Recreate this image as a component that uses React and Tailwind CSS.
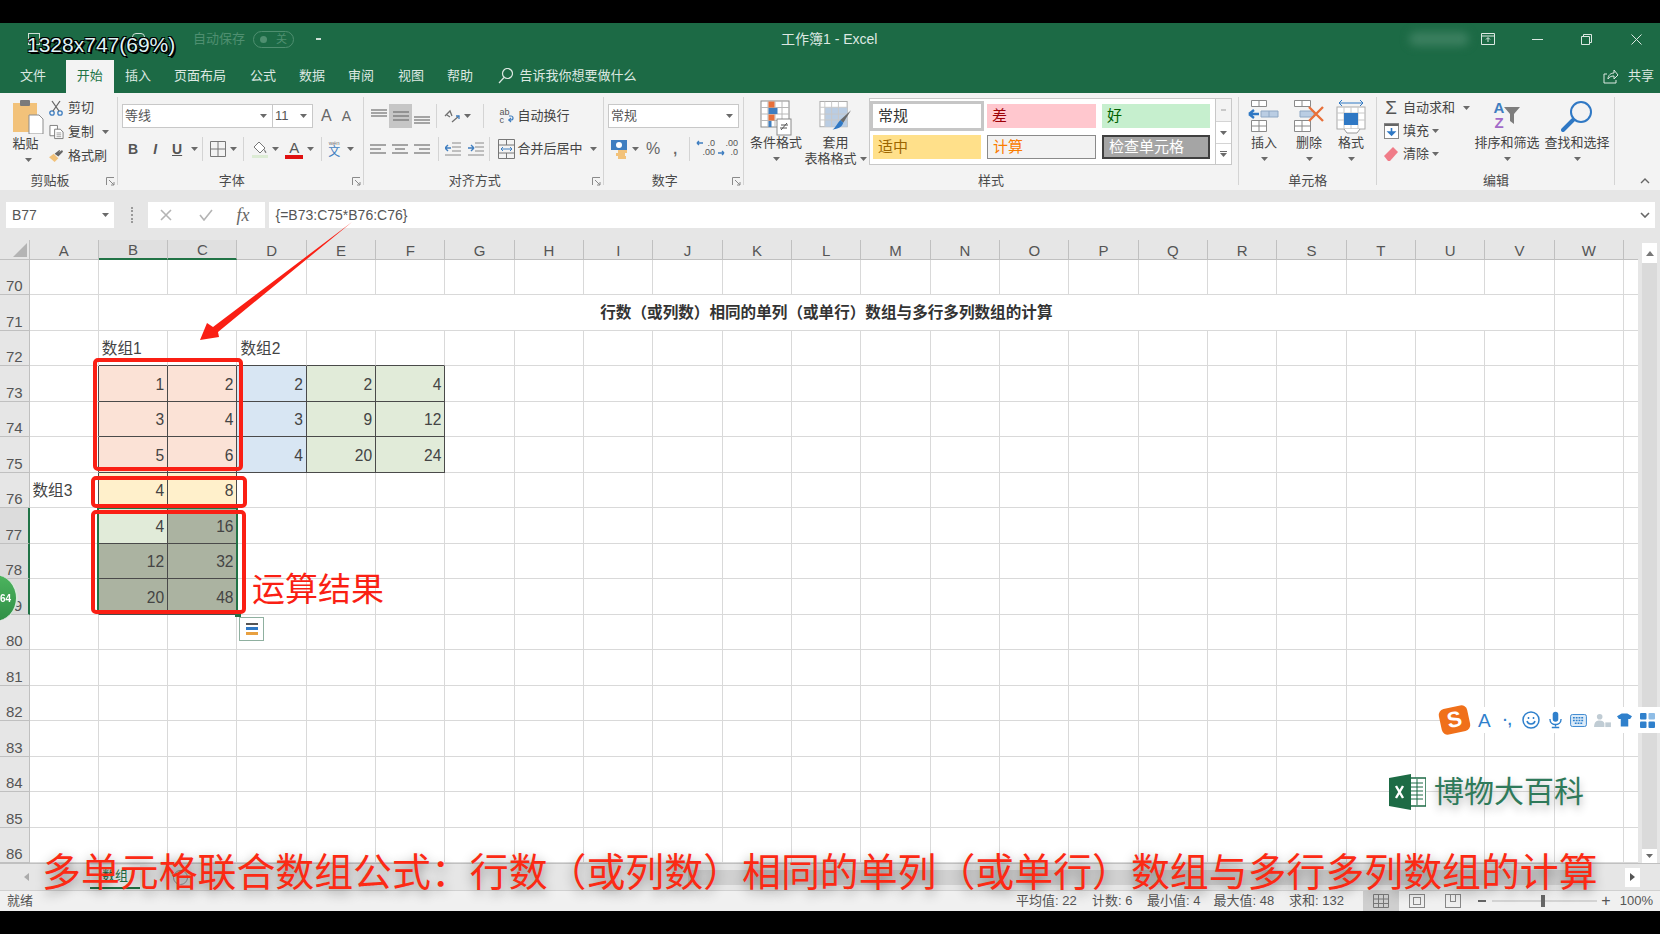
// App.jsx - Excel window video frame

const COLS = 'ABCDEFGHIJKLMNOPQRSTUVW'.split('');
const ROWS = Array.from({ length: 17 }, (_, i) => 70 + i);

const VALUES = {
  B72: '数组1', D72: '数组2',
  B73: 1, C73: 2, D73: 2, E73: 2, F73: 4,
  B74: 3, C74: 4, D74: 3, E74: 9, F74: 12,
  B75: 5, C75: 6, D75: 4, E75: 20, F75: 24,
  A76: '数组3', B76: 4, C76: 8,
  B77: 4, C77: 16, B78: 12, C78: 32, B79: 20, C79: 48,
};

const fillFor = (id) => {
  const c = id[0];
  const r = Number(id.slice(1));
  if ((c === 'B' || c === 'C') && r >= 73 && r <= 75) return 'bg-[#fbe2d6]';
  if (c === 'D' && r >= 73 && r <= 75) return 'bg-[#d8e6f3]';
  if ((c === 'E' || c === 'F') && r >= 73 && r <= 75) return 'bg-[#e1ebd9]';
  if ((c === 'B' || c === 'C') && r === 76) return 'bg-[#fff0cb]';
  if (id === 'B77') return 'bg-[#e1ebd9]';
  if ((c === 'B' || c === 'C') && r >= 77 && r <= 79) return 'bg-[#abb3a1]';
  return 'bg-white';
};

const inTable = (c, r) =>
  (r >= 73 && r <= 75 && 'BCDEF'.includes(c)) || (r >= 76 && r <= 79 && 'BC'.includes(c));

const Caret = ({ className = '' }) => (
  <svg viewBox="0 0 7 4" className={'w-[7px] h-[4px] shrink-0 ' + className}>
    <path d="M0 0h7L3.5 4z" fill="#6a6a6a" />
  </svg>
);

const Lines = ({ rows, className = 'w-[16px] h-[14px]' }) => (
  <svg viewBox="0 0 16 14" className={className}>
    {rows.map(([a, b, y], i) => (
      <path key={i} d={`M${a} ${y}H${b}`} stroke="#707070" strokeWidth="1.2" />
    ))}
  </svg>
);

const Sep = ({ className = '' }) => <div className={'w-px h-[24px] bg-[#d4d4d4] shrink-0 ' + className} />;

const Launcher = () => (
  <svg viewBox="0 0 9 9" className="w-[9px] h-[9px] absolute right-[3px] bottom-[4px]">
    <path d="M.5 8V.5H8M3 3l5 5M8 5v3H5" fill="none" stroke="#8a8a8a" />
  </svg>
);

const Group = ({ label, width, children, launcher }) => (
  <div className={'relative flex flex-col h-full shrink-0 ' + width}>
    <div className="flex-1 min-h-0">{children}</div>
    <div className={'h-[19px] text-center text-[13px] leading-[19px] text-[#4a4a4a] ' + (launcher ? 'pr-[18px]' : '')}>{label}</div>
    {launcher && <Launcher />}
    <div className="absolute right-0 top-[4px] w-px h-[88px] bg-[#d4d4d4]" />
  </div>
);

const LargeBtn = ({ icon, top, bottom, caretInline, width }) => (
  <div className={'flex flex-col items-center shrink-0 ' + width}>
    <div className="h-[35px] flex items-start justify-center">{icon}</div>
    <div className="h-[16px] text-[13px] leading-[16px] whitespace-nowrap text-[#444]">{top}</div>
    <div className="h-[16px] flex items-center gap-[3px] text-[13px] leading-[16px] whitespace-nowrap text-[#444]">
      {bottom}
      {(!bottom || caretInline) && <Caret />}
    </div>
  </div>
);

const SmallRow = ({ icon, text, caret, iconBox = 'w-[20px]' }) => (
  <div className="h-[23px] flex items-center text-[13px] text-[#444] whitespace-nowrap">
    <div className={'flex justify-center shrink-0 ' + iconBox}>{icon}</div>
    <span className="ml-[2px]">{text}</span>
    {caret}
  </div>
);

const SelectBox = ({ text, className }) => (
  <div className={'h-[24px] bg-white border border-[#c8c8c8] flex items-center justify-between pl-[2px] pr-[5px] text-[13px] text-[#555] ' + className}>
    <span>{text}</span>
    <Caret />
  </div>
);

const StyleCell = ({ text, className }) => (
  <div className={'h-[24px] flex items-center pl-[5px] text-[15px] ' + className}>{text}</div>
);

const PasteIcon = () => (
  <svg viewBox="0 0 32 34" className="w-[32px] h-[34px]">
    <rect x="1" y="3" width="24" height="29" fill="#f2c27a" />
    <rect x="8" y="0" width="10" height="6" rx="1" fill="#7b7b7b" />
    <path d="M17 15h10l4 4v15H17z" fill="#fff" stroke="#8d8d8d" />
  </svg>
);
const ScissorsIcon = () => (
  <svg viewBox="0 0 14 16" className="w-[14px] h-[16px]" fill="none" stroke="#3f7ec0" strokeWidth="1.3">
    <circle cx="3" cy="13" r="2.2" />
    <circle cx="11" cy="13" r="2.2" />
    <path d="M4 11L11 1M10 11L3 1" stroke="#666" />
  </svg>
);
const CopyIcon = () => (
  <svg viewBox="0 0 16 16" className="w-[15px] h-[16px]" fill="#fff" stroke="#7a7a7a">
    <path d="M1 1h8v11H1z" />
    <path d="M6 5h6l3 3v7H6z" />
    <path d="M8 9h5M8 11h5M8 13h5" stroke="#9a9a9a" />
  </svg>
);
const BrushIcon = () => (
  <svg viewBox="0 0 16 14" className="w-[15px] h-[13px]">
    <path d="M0 9l5-4 5 5-4 4z" fill="#f2c27a" />
    <path d="M6 5l5-4 1 1-2 2 4-3 1 2-5 5z" fill="#666" />
  </svg>
);
const BorderIcon = () => (
  <svg viewBox="0 0 16 16" className="w-[16px] h-[16px]" fill="none" stroke="#777">
    <path d="M.5.5h15v15H.5zM8 .5v15M.5 8h15" />
  </svg>
);
const FillIcon = () => (
  <svg viewBox="0 0 16 18" className="w-[16px] h-[18px]">
    <path d="M7 2l6 6-5 5-6-6z" fill="#fff" stroke="#777" />
    <path d="M12 9c2 2 3 4 2 4s-2-2-2-4z" fill="#777" />
    <rect x="0" y="15" width="16" height="3" fill="#dcebd4" />
  </svg>
);
const WrapIcon = () => (
  <svg viewBox="0 0 14 16" className="w-[14px] h-[16px]" fill="none" stroke="#3f7ec0" strokeWidth="1.2">
    <path d="M8 12h3a2 2 0 0 0 0-4H9M9 12l2-2M9 12l2 2" />
  </svg>
);
const MergeIcon = () => (
  <svg viewBox="0 0 17 20" className="w-[17px] h-[20px]" fill="none" stroke="#777">
    <path d="M.5.5h16v19H.5zM.5 6h16M.5 14h16M8.5.5V6M8.5 14v5.5" />
    <path d="M3 10h11M3 10l2-2M3 10l2 2M14 10l-2-2M14 10l-2 2" stroke="#3f7ec0" />
  </svg>
);
const OrientIcon = () => (
  <svg viewBox="0 0 18 16" className="w-[18px] h-[16px]" fill="none" stroke="#707070" strokeWidth="1.3">
    <path d="M2 8l5-5 2 5M4 7l3 2M9 14l7-6" />
    <path d="M13 8h3v3" stroke="#3f7ec0" />
  </svg>
);
const IndentIcon = ({ flip }) => (
  <svg viewBox="0 0 16 16" className="w-[16px] h-[16px]" fill="none">
    <path d="M7 2h9M7 6h9M7 10h9M0 14h16" stroke="#8a8a8a" />
    <path d={flip ? 'M0 7h6M6 7L3 4M6 7l-3 3' : 'M0 7h6M0 7l3-3M0 7l3 3'} stroke="#3f7ec0" strokeWidth="1.4" />
  </svg>
);
const CurrencyIcon = () => (
  <svg viewBox="0 0 17 19" className="w-[17px] h-[19px]">
    <rect x="0" y="0" width="16" height="10" fill="#3f7ec0" />
    <circle cx="8" cy="5" r="3" fill="#fff" />
    <rect x="7" y="10" width="9" height="3" fill="#f2c27a" />
    <rect x="5" y="13" width="9" height="3" fill="#f2c27a" />
    <rect x="7" y="16" width="8" height="3" fill="#f2c27a" />
  </svg>
);
const DecimalIcon = ({ more }) => (
  <div className="relative w-[20px] h-[20px] text-[9px] leading-[9px] text-[#555] text-right">
    <div>{more ? '.0' : '.00'}</div>
    <div>{more ? '.00' : '.0'}</div>
    <svg viewBox="0 0 8 6" className={'w-[8px] h-[6px] absolute left-0 ' + (more ? 'top-[1px]' : 'top-[11px]')}>
      <path d={more ? 'M8 3H2M2 3l2-2M2 3l2 2' : 'M0 3h6M6 3L4 1M6 3L4 5'} stroke="#3f7ec0" strokeWidth="1.4" fill="none" />
    </svg>
  </div>
);
const CondIcon = () => (
  <svg viewBox="0 0 32 37" className="w-[32px] h-[37px]">
    <rect x="1" y="1" width="28" height="26" fill="#fff" stroke="#8a8a8a" />
    <path d="M8 1v26M15 1v26M22 1v26M1 7.5h28M1 14h28M1 20.5h28" stroke="#b8b8b8" />
    <rect x="8.5" y="1.5" width="6" height="6" fill="#e8703a" />
    <rect x="8.5" y="8" width="9" height="6" fill="#3f7ec0" />
    <rect x="8.5" y="14.5" width="6" height="6" fill="#e8703a" />
    <rect x="8.5" y="21" width="3" height="6" fill="#3f7ec0" />
    <rect x="17" y="19" width="14" height="16" fill="#fff" stroke="#8a8a8a" />
    <path d="M21 30l6-7M21 25h7M20 28h7" stroke="#555" />
  </svg>
);
const TableIcon = () => (
  <svg viewBox="0 0 34 35" className="w-[33px] h-[35px]">
    <rect x="1" y="1" width="28" height="26" fill="#fff" stroke="#aaa" />
    <rect x="6" y="7" width="23" height="20" fill="#bacde3" />
    <path d="M6 1v26M13 1v26M20 1v26M1 7h28M1 14h28M1 20h28" stroke="#c8c8c8" />
    <path d="M33 10l-8 13-3-3z" fill="#6a6a6a" />
    <path d="M22 20l3 3c-2 6-7 6-11 7 3-2 5-7 8-10z" fill="#2f78c4" />
  </svg>
);
const InsertIcon = () => (
  <svg viewBox="0 0 32 32" className="w-[32px] h-[32px]">
    <g fill="#fff" stroke="#8a8a8a">
      <path d="M3.5.5h15v6h-15zM11 .5v6M3.5 20.5h15v11h-15zM3.5 26h15M11 20.5v11" />
    </g>
    <path d="M13 11h17v6H13zM21 11v6" fill="#bacde3" stroke="#8fa8c4" />
    <path d="M11 14H1M1 14l5-4M1 14l5 4" stroke="#2f78c4" strokeWidth="2.4" fill="none" />
  </svg>
);
const DeleteIcon = () => (
  <svg viewBox="0 0 32 32" className="w-[32px] h-[32px]">
    <g fill="#fff" stroke="#8a8a8a">
      <path d="M1.5.5h16v6h-16zM9 .5v6M1.5 20.5h16v11h-16zM1.5 26h16M9 20.5v11" />
    </g>
    <path d="M7 11h14v6H7z" fill="#bacde3" stroke="#8fa8c4" />
    <path d="M16 7l14 14M30 7L16 21" stroke="#e8703a" strokeWidth="2.4" />
  </svg>
);
const FormatIcon = () => (
  <svg viewBox="0 0 30 34" className="w-[30px] h-[34px]">
    <path d="M3 3h24M3 3l3-3M3 3l3 3M27 3l-3-3M27 3l-3 3" stroke="#2f78c4" fill="none" />
    <rect x="1" y="7" width="28" height="22" fill="#fff" stroke="#aaa" />
    <path d="M8 7v22M15 7v22M22 7v22M1 13h28M1 20h28" stroke="#c8c8c8" />
    <rect x="8" y="13" width="14" height="12" fill="#2f78c4" />
    <path d="M8 29l3 4h10l3-4" fill="#fff" stroke="#999" />
  </svg>
);
const FillDownIcon = () => (
  <svg viewBox="0 0 15 16" className="w-[15px] h-[16px]">
    <rect x=".5" y=".5" width="14" height="15" fill="#fff" stroke="#888" />
    <path d="M.5 2h14" stroke="#666" strokeWidth="2" />
    <path d="M7.5 5v7M7.5 12l-3-3h6z" stroke="#2f78c4" strokeWidth="1.6" fill="#2f78c4" />
  </svg>
);
const EraserIcon = () => (
  <svg viewBox="0 0 14 14" className="w-[14px] h-[14px]">
    <path d="M9 0l5 5-8 9H4L0 9z" fill="#f07c88" />
  </svg>
);
const FunnelIcon = () => (
  <svg viewBox="0 0 16 17" className="w-[16px] h-[17px]">
    <path d="M0 0h16l-6 7v10l-4-3V7z" fill="#7d7d7d" />
  </svg>
);
const SearchBig = () => (
  <svg viewBox="0 0 32 32" className="w-[32px] h-[32px]" fill="none">
    <circle cx="20" cy="12" r="10" stroke="#2f78c4" strokeWidth="2" />
    <path d="M12 20L2 30" stroke="#2f78c4" strokeWidth="4" strokeLinecap="round" />
  </svg>
);

const TitleBar = () => (
  <div className="h-[37px] bg-[#1c6a45] flex items-center text-[#dce8e2] pb-[5px]">
    <div className="w-[330px] shrink-0 flex items-center">
      <div className="ml-[28px] w-[12px] h-[12px] border border-[#cfe0d7]" />
      <div className="ml-[92px] w-[13px] h-[12px] border border-[#cfe0d7] rounded-[4px]" />
      <span className="ml-[48px] text-[13px] text-[#4f8f70] whitespace-nowrap">自动保存</span>
      <div className="ml-[8px] w-[41px] h-[17px] rounded-full border border-[#4f8f70] flex items-center justify-between px-[6px] text-[11px] text-[#4f8f70]">
        <div className="w-[7px] h-[7px] rounded-full bg-[#4f8f70]" />
        <span>关</span>
      </div>
      <div className="ml-[22px] w-[5px] h-[2px] bg-[#cfe0d7]" />
    </div>
    <div className="ml-[451px] text-[14px] whitespace-nowrap">工作簿1 - Excel</div>
    <div className="ml-[532px] w-[60px] h-[14px] rounded-full bg-[#3b7f5f] blur-[4px]" />
    <svg viewBox="0 0 14 12" className="ml-[12px] w-[14px] h-[12px]" fill="none" stroke="#dce8e2">
      <path d="M.5.5h13v11H.5zM.5 3h13M7 9V5M5 6.5L7 4.5l2 2" />
    </svg>
    <div className="ml-[37px] w-[11px] h-px bg-[#dce8e2]" />
    <svg viewBox="0 0 11 11" className="ml-[38px] w-[11px] h-[11px]" fill="none" stroke="#dce8e2">
      <path d="M.5 2.5h8v8h-8zM2.5 2.5v-2h8v8h-2" />
    </svg>
    <svg viewBox="0 0 11 11" className="ml-[39px] w-[11px] h-[11px]" fill="none" stroke="#dce8e2">
      <path d="M.5.5l10 10M10.5.5l-10 10" />
    </svg>
  </div>
);

const TABS = [
  ['文件', 'w-[66px]'],
  ['开始', 'w-[47.5px]'],
  ['插入', 'w-[49px]'],
  ['页面布局', 'w-[75px]'],
  ['公式', 'w-[51px]'],
  ['数据', 'w-[47px]'],
  ['审阅', 'w-[51px]'],
  ['视图', 'w-[49px]'],
  ['帮助', 'w-[49px]'],
];

const TabRow = () => (
  <div className="h-[33px] bg-[#1c6a45] flex items-stretch text-[13px] text-[#dce8e2]">
    {TABS.map(([name, w]) =>
      name === '开始' ? (
        <div key={name} className={'bg-[#f3f3f3] text-[#217346] flex items-center justify-center pb-[2px] ' + w}>{name}</div>
      ) : (
        <div key={name} className={'flex items-center justify-center pb-[2px] ' + w}>{name}</div>
      )
    )}
    <div className="flex items-center ml-[13px] pb-[2px]">
      <svg viewBox="0 0 15 16" className="w-[15px] h-[16px]" fill="none" stroke="#dce8e2" strokeWidth="1.2">
        <circle cx="9.5" cy="5.5" r="5" />
        <path d="M6 9.5L1 15" />
      </svg>
      <span className="ml-[7px]">告诉我你想要做什么</span>
    </div>
    <div className="flex items-center ml-auto pr-[6px] pb-[2px]">
      <svg viewBox="0 0 16 16" className="w-[16px] h-[16px]" fill="none" stroke="#dce8e2">
        <path d="M4 6H1v9h12v-3M5 11c0-4 3-6 6-6V2l4 5-4 4V8c-3 0-5 1-6 3z" />
      </svg>
      <span className="ml-[9px]">共享</span>
    </div>
  </div>
);

const Ribbon = () => (
  <div className="h-[97px] bg-[#f3f3f3] flex items-stretch text-[#444]">
    <Group label="剪贴板" width="w-[118px]" launcher>
      <div className="flex pl-[11px] pt-[7px]">
        <div className="w-[34px] flex flex-col items-center">
          <PasteIcon />
          <div className="text-[13px] leading-[16px] mt-[2px] -ml-[5px]">粘贴</div>
          <Caret className="mt-[6px]" />
        </div>
        <div className="ml-[1px] -mt-[4px]">
          <SmallRow icon={<ScissorsIcon />} text="剪切" />
          <div className="mt-[1px]">
            <SmallRow icon={<CopyIcon />} text="复制" caret={<Caret className="ml-[8px]" />} />
          </div>
          <div className="mt-[1px]">
            <SmallRow icon={<BrushIcon />} text="格式刷" />
          </div>
        </div>
      </div>
    </Group>

    <Group label="字体" width="w-[245.5px]" launcher>
      <div className="pl-[4px] pt-[11px]">
        <div className="flex items-center">
          <SelectBox text="等线" className="w-[151px]" />
          <SelectBox text="11" className="w-[41px] -ml-px" />
          <span className="ml-[8px] text-[16px] text-[#666]">A</span>
          <span className="ml-[10px] text-[14px] text-[#666]">A</span>
        </div>
        <div className="flex items-center h-[24px] mt-[9px] text-[#555]">
          <span className="ml-[6px] text-[14px] font-bold">B</span>
          <span className="ml-[15px] text-[14px] italic font-bold">I</span>
          <span className="ml-[15px] text-[14px] font-bold underline">U</span>
          <Caret className="ml-[9px]" />
          <Sep className="ml-[4px]" />
          <div className="ml-[7px]"><BorderIcon /></div>
          <Caret className="ml-[4px]" />
          <Sep className="ml-[6px]" />
          <div className="ml-[8px]"><FillIcon /></div>
          <Caret className="ml-[4px]" />
          <div className="ml-[6px] w-[18px] flex flex-col items-center">
            <span className="text-[15px] leading-[15px]">A</span>
            <div className="w-[18px] h-[4px] bg-[#e01010]" />
          </div>
          <Caret className="ml-[4px]" />
          <Sep className="ml-[7px]" />
          <div className="ml-[5px] w-[14px] flex flex-col items-center text-[#3f7ec0]">
            <span className="text-[6px] leading-[6px] text-[#777]">wén</span>
            <span className="text-[12px] leading-[12px]">文</span>
          </div>
          <Caret className="ml-[6px]" />
        </div>
      </div>
    </Group>

    <Group label="对齐方式" width="w-[240.5px]" launcher>
      <div className="pt-[11px]">
        <div className="flex items-center h-[24px]">
          <div className="ml-[7px] w-[16px]"><Lines rows={[[0, 16, 1], [0, 16, 4], [0, 16, 7]]} /></div>
          <div className="ml-[2.5px] w-[23px] h-[24px] bg-[#c6c6c6] flex items-center justify-center">
            <Lines rows={[[0, 16, 3], [0, 16, 7], [0, 16, 11]]} />
          </div>
          <div className="ml-[1.5px] w-[16px] pt-[2px]"><Lines rows={[[0, 16, 7], [0, 16, 10], [0, 16, 13]]} /></div>
          <Sep className="ml-[6px]" />
          <div className="ml-[6px]"><OrientIcon /></div>
          <Caret className="ml-[3px]" />
          <Sep className="ml-[12px]" />
          <div className="ml-[16px] relative w-[14px] h-[16px] text-[9px] leading-[8px] text-[#555]">
            ab
            <br />c
            <div className="absolute inset-0"><WrapIcon /></div>
          </div>
          <span className="ml-[4px] text-[13px] whitespace-nowrap">自动换行</span>
        </div>
        <div className="flex items-center h-[24px] mt-[9px]">
          <div className="ml-[6px]"><Lines rows={[[0, 16, 3], [0, 11, 7], [0, 16, 11]]} /></div>
          <div className="ml-[6px]"><Lines rows={[[0, 16, 3], [3, 13, 7], [0, 16, 11]]} /></div>
          <div className="ml-[6px]"><Lines rows={[[0, 16, 3], [5, 16, 7], [0, 16, 11]]} /></div>
          <Sep className="ml-[8px]" />
          <div className="ml-[6px]"><IndentIcon /></div>
          <div className="ml-[7px]"><IndentIcon flip /></div>
          <Sep className="ml-[5px]" />
          <div className="ml-[8px]"><MergeIcon /></div>
          <span className="ml-[3px] text-[13px] whitespace-nowrap">合并后居中</span>
          <Caret className="ml-[7px]" />
        </div>
      </div>
    </Group>

    <Group label="数字" width="w-[139.5px]" launcher>
      <div className="pl-[4px] pt-[11px]">
        <SelectBox text="常规" className="w-[131px]" />
        <div className="flex items-center h-[24px] mt-[9px] text-[#666]">
          <div className="ml-[3px]"><CurrencyIcon /></div>
          <Caret className="ml-[4px]" />
          <span className="ml-[7px] text-[16px]">%</span>
          <span className="ml-[13px] text-[14px] font-bold">,</span>
          <Sep className="ml-[12px]" />
          <div className="ml-[5px]"><DecimalIcon more /></div>
          <div className="ml-[3px]"><DecimalIcon /></div>
        </div>
      </div>
    </Group>

    <Group label="样式" width="w-[495px]">
      <div className="flex pl-[3.5px] pt-[5px]">
        <div className="pt-[2px]">
          <LargeBtn width="w-[58px]" icon={<CondIcon />} top="条件格式" />
        </div>
        <div className="pt-[2px]">
          <LargeBtn width="w-[61px]" icon={<TableIcon />} top="套用" bottom="表格格式" caretInline />
        </div>
        <div className="ml-[3px] flex w-[363px] h-[67px] bg-white border border-[#c8c8c8]">
          <div className="pl-[3px] pt-[5px] grid content-start grid-cols-[108px_109px_108px] gap-x-[6px] gap-y-[7px] w-[341px]">
            <StyleCell text="常规" className="bg-white text-[#333] outline-3 outline-[#c6c6c6]" />
            <StyleCell text="差" className="bg-[#ffc7ce] text-[#9c0006]" />
            <StyleCell text="好" className="bg-[#c6efce] text-[#006100]" />
            <StyleCell text="适中" className="bg-[#ffe08a] text-[#9c6500]" />
            <StyleCell text="计算" className="bg-[#f2f2f2] text-[#fa7d00] border border-[#8a8a8a]" />
            <StyleCell text="检查单元格" className="bg-[#a5a5a5] text-white border-2 border-[#3f3f3f]" />
          </div>
          <div className="ml-auto w-[16px] flex flex-col border-l border-[#c8c8c8] text-[#999]">
            <div className="h-[23px] bg-[#f3f3f3] border-b border-[#d4d4d4] flex items-center justify-center">
              <div className="w-[5px] h-[2px] bg-[#c8c8c8]" />
            </div>
            <div className="h-[22px] flex items-center justify-center border-b border-[#d4d4d4]"><Caret /></div>
            <div className="h-[20px] flex flex-col items-center justify-center gap-[1px]">
              <div className="w-[7px] h-px bg-[#6a6a6a]" />
              <Caret />
            </div>
          </div>
        </div>
      </div>
    </Group>

    <Group label="单元格" width="w-[138.5px]">
      <div className="flex pl-[1.5px] pt-[7px]">
        <LargeBtn width="w-[48px]" icon={<InsertIcon />} top="插入" />
        <LargeBtn width="w-[42px]" icon={<DeleteIcon />} top="删除" />
        <LargeBtn width="w-[42px]" icon={<FormatIcon />} top="格式" />
      </div>
    </Group>

    <Group label="编辑" width="w-[238px]">
      <div className="flex pt-[3px]">
        <div className="w-[95px] pl-[4px] shrink-0">
          <SmallRow icon={<span className="text-[19px] leading-[19px] text-[#555]">Σ</span>} text="自动求和" caret={<Caret className="ml-[8px]" />} />
          <SmallRow icon={<FillDownIcon />} text="填充" caret={<Caret className="ml-[3px]" />} />
          <SmallRow icon={<EraserIcon />} text="清除" caret={<Caret className="ml-[3px]" />} />
        </div>
        <div className="pt-[4px]">
          <LargeBtn
            width="w-[70px]"
            icon={
              <div className="flex items-center">
                <div className="flex flex-col items-center text-[15px] leading-[15px] font-bold">
                  <span className="text-[#3f7ec0]">A</span>
                  <span className="text-[#a26ac8]">Z</span>
                </div>
                <FunnelIcon />
              </div>
            }
            top="排序和筛选"
          />
        </div>
        <div className="pt-[4px]">
          <LargeBtn width="w-[70px]" icon={<SearchBig />} top="查找和选择" />
        </div>
      </div>
    </Group>

    <div className="flex-1 flex items-end justify-end pr-[10px] pb-[6px]">
      <svg viewBox="0 0 10 6" className="w-[10px] h-[6px]" fill="none" stroke="#666" strokeWidth="1.4">
        <path d="M1 5l4-4 4 4" />
      </svg>
    </div>
  </div>
);

const FormulaBar = () => (
  <div className="h-[50px] bg-[#e6e6e6] pt-[12px] flex items-start">
    <div className="ml-[6px] w-[108px] h-[26px] bg-white flex items-center justify-between pl-[6px] pr-[5px] text-[14px] text-[#555]">
      <span>B77</span>
      <Caret />
    </div>
    <div className="ml-[17px] w-[3px] h-[16px] mt-[5px] border-l-2 border-dotted border-[#999]" />
    <div className="ml-[13.5px] w-[117.5px] h-[26px] bg-white flex items-center text-[#aaa]">
      <svg viewBox="0 0 12 12" className="ml-[12.5px] w-[12px] h-[12px]" fill="none" stroke="#b4b4b4" strokeWidth="1.6">
        <path d="M1 1l10 10M11 1L1 11" />
      </svg>
      <svg viewBox="0 0 14 12" className="ml-[26.5px] w-[14px] h-[12px]" fill="none" stroke="#b4b4b4" strokeWidth="1.6">
        <path d="M1 6l4 5 8-10" />
      </svg>
      <span className="ml-[24px] font-['Liberation_Serif',serif] italic text-[18px] text-[#666]">fx</span>
    </div>
    <div className="ml-[3.5px] w-[1386px] h-[26px] bg-white flex items-center pl-[7px] text-[14px] text-[#555]">
      <span>{'{=B73:C75*B76:C76}'}</span>
      <svg viewBox="0 0 10 6" className="ml-auto mr-[5px] w-[10px] h-[6px]" fill="none" stroke="#666" strokeWidth="1.6">
        <path d="M1 1l4 4 4-4" />
      </svg>
    </div>
  </div>
);

const ColHeader = () => (
  <div className="h-[19.5px] flex bg-[#e6e6e6] text-[15px] text-[#555]">
    <div className="w-[29.5px] shrink-0 border-r border-[#c0c0c0] border-b relative">
      <svg viewBox="0 0 14 14" className="absolute right-[2px] bottom-[2px] w-[14px] h-[14px]">
        <path d="M14 0v14H0z" fill="#b4b4b4" />
      </svg>
    </div>
    {COLS.map((c) =>
      c === 'B' || c === 'C' ? (
        <div key={c} className="w-[69.34px] shrink-0 flex items-center justify-center pt-[2px] bg-[#e0e0e0] border-r border-[#c0c0c0] border-b-2 border-b-[#217346] leading-none">
          {c}
        </div>
      ) : (
        <div key={c} className="w-[69.34px] shrink-0 flex items-center justify-center pt-[2px] border-r border-b border-[#c0c0c0] leading-none">
          {c}
        </div>
      )
    )}
    <div className="flex-1 border-b border-[#c0c0c0]" />
  </div>
);

const Cell = ({ col, row }) => {
  const id = col + row;
  const value = VALUES[id];
  const rightDark = inTable(col, row) || inTable(COLS[COLS.indexOf(col) + 1] || 'X', row);
  const bottomDark = inTable(col, row) || inTable(col, row + 1);
  const isText = typeof value === 'string';
  return (
    <div
      className={[
        'w-[69.34px] shrink-0 h-full flex items-center pt-[2px] border-r border-b text-[15.6px] text-[#444] whitespace-nowrap',
        fillFor(id),
        rightDark ? 'border-r-[#4a4a4a]' : 'border-r-[#d9d9d9]',
        bottomDark ? 'border-b-[#4a4a4a]' : 'border-b-[#d9d9d9]',
        isText ? 'justify-start pl-[3px]' : 'justify-end pr-[3px]',
      ].join(' ')}
    >
      {value}
    </div>
  );
};

const SheetRow = ({ row }) => {
  const selected = row >= 77 && row <= 79;
  return (
    <div className="h-[35.5px] flex">
      <div
        className={
          'w-[29.5px] shrink-0 flex items-end justify-center text-[15px] leading-[17px] text-[#555] border-b border-[#c0c0c0] ' +
          (selected ? 'bg-[#dcdcdc] border-r-2 border-r-[#217346]' : 'bg-[#e6e6e6] border-r border-r-[#c0c0c0]')
        }
      >
        {row}
      </div>
      {row === 71 ? (
        <>
          <Cell col="A" row={71} />
          <div className="w-[1456.14px] shrink-0 flex items-center justify-center text-[15.6px] font-bold text-[#333] bg-white border-r border-b border-[#d9d9d9] whitespace-nowrap">
            行数（或列数）相同的单列（或单行）数组与多行多列数组的计算
          </div>
          <Cell col="W" row={71} />
        </>
      ) : (
        COLS.map((c) => <Cell key={c} col={c} row={row} />)
      )}
      <div className="flex-1 bg-white border-b border-[#d9d9d9]" />
    </div>
  );
};

const ScrollBtn = ({ up }) => (
  <div className="h-[20px] bg-white flex items-center justify-center">
    <svg viewBox="0 0 8 5" className="w-[8px] h-[5px]">
      <path d={up ? 'M0 5h8L4 0z' : 'M0 0h8L4 5z'} fill="#777" />
    </svg>
  </div>
);

const Sheet = () => (
  <div className="h-[623px] flex bg-[#e6e6e6] overflow-hidden">
    <div className="w-[1638px] shrink-0 overflow-hidden">
      <ColHeader />
      {ROWS.map((r) => (
        <SheetRow key={r} row={r} />
      ))}
    </div>
    <div className="ml-[4px] w-[15px] flex flex-col bg-[#dadada]">
      <div className="h-[3px] bg-[#e6e6e6]" />
      <ScrollBtn up />
      <div className="flex-1" />
      <div className="h-[14px] bg-white flex items-center justify-center">
        <Caret />
      </div>
    </div>
  </div>
);

const TabBar = () => (
  <div className="h-[27px] bg-[#e6e6e6] border-t border-[#c0c0c0] flex items-center">
    <svg viewBox="0 0 5 8" className="ml-[24px] w-[5px] h-[8px]">
      <path d="M5 0v8L0 4z" fill="#aaa" />
    </svg>
    <div className="ml-[61px] w-[50px] h-[24px] bg-[#f4f4f4] border-b-2 border-[#217346] text-[13px] text-center leading-[22px] text-[#217346]">
      数组
    </div>
    <div className="ml-[33px] w-[15px] h-[15px] rounded-full border border-[#999]" />
    <div className="ml-[500px] h-[15px] w-[900px] bg-[#d0d0d0]" />
    <div className="ml-auto mr-[20px] w-[15px] h-[19px] bg-white flex items-center justify-center">
      <svg viewBox="0 0 5 8" className="w-[5px] h-[8px]">
        <path d="M0 0v8l5-4z" fill="#555" />
      </svg>
    </div>
  </div>
);

const BorderGrid = () => (
  <svg viewBox="0 0 16 14" className="w-[16px] h-[14px]" fill="none" stroke="#777">
    <path d="M.5.5h15v13H.5zM5.5.5v13M10.5.5v13M.5 5h15M.5 9.5h15" />
  </svg>
);

const StatusBar = () => (
  <div className="h-[21px] bg-[#f0f0f0] border-t border-[#d0d0d0] flex items-center text-[13px] text-[#555] whitespace-nowrap">
    <span className="ml-[7px] w-[1009px] shrink-0">就绪</span>
    <span className="w-[76px] shrink-0">平均值: 22</span>
    <span className="w-[55px] shrink-0">计数: 6</span>
    <span className="w-[66.5px] shrink-0">最小值: 4</span>
    <span className="w-[75.5px] shrink-0">最大值: 48</span>
    <span className="w-[74px] shrink-0">求和: 132</span>
    <div className="w-[36px] h-full bg-[#cfcfcf] flex items-center justify-center">
      <BorderGrid />
    </div>
    <div className="ml-[10px] w-[16px] h-[14px] border border-[#888] flex items-center justify-center">
      <div className="w-[8px] h-[8px] border border-[#888]" />
    </div>
    <div className="ml-[20px] w-[16px] h-[14px] border border-[#888] flex justify-center">
      <div className="w-[6px] h-[7px] border-x border-b border-[#888]" />
    </div>
    <div className="ml-[17px] w-[8px] h-[2px] bg-[#666]" />
    <div className="ml-[6px] w-[105px] h-[2px] bg-[#d4d4d4] relative">
      <div className="absolute left-[49px] -top-[5px] w-[4px] h-[12px] bg-[#666]" />
    </div>
    <span className="ml-[2px] text-[16px] w-[14px] text-center">+</span>
    <span className="ml-auto mr-[7px]">100%</span>
  </div>
);

const ImeBar = () => (
  <div className="absolute left-[1440px] top-[705px] flex items-center h-[30px] w-[220px]">
    <div className="relative z-10 w-[29px] h-[26px] rounded-[6px] bg-[#f0701a] -rotate-12 flex items-center justify-center text-white font-bold text-[22px] leading-none">
      S
    </div>
    <div className="-ml-[6px] flex-1 h-[26px] bg-white flex items-center text-[#2f80cc]">
      <span className="ml-[15px] w-[17px] text-[19px] leading-none">A</span>
      <span className="ml-[8px] w-[10px] text-[14px] font-bold leading-none">·,</span>
      <svg viewBox="0 0 18 18" className="ml-[9px] w-[18px] h-[18px]" fill="none" stroke="#2f80cc" strokeWidth="1.5">
        <circle cx="9" cy="9" r="8" />
        <path d="M5 10c1 4 7 4 8 0M6.5 6v2M11.5 6v2" />
      </svg>
      <svg viewBox="0 0 14 18" className="ml-[9px] w-[13px] h-[18px]" fill="#2f80cc">
        <rect x="4" y="0" width="6" height="11" rx="3" />
        <path d="M1 8c0 8 12 8 12 0M7 13v3M3 17h8" fill="none" stroke="#2f80cc" strokeWidth="1.5" />
      </svg>
      <svg viewBox="0 0 18 14" className="ml-[8px] w-[17px] h-[13px]">
        <rect x=".5" y=".5" width="17" height="13" rx="2" fill="#dcebf8" stroke="#2f80cc" />
        <path d="M3 4h12M3 7h12M5 10h8" stroke="#2f80cc" strokeWidth="1.5" strokeDasharray="2 1" />
      </svg>
      <svg viewBox="0 0 18 16" className="ml-[7px] w-[17px] h-[15px]" fill="#c0ccd4">
        <circle cx="6" cy="4" r="3" />
        <path d="M0 15c0-6 3-7 6-7s4 1 5 3v4z" />
        <path d="M12 10h6v5h-6z" />
      </svg>
      <svg viewBox="0 0 16 14" className="ml-[6px] w-[15px] h-[14px]" fill="#2f80cc">
        <path d="M5 0h6l5 3-2 3h-2v8H4V6H2L0 3z" />
      </svg>
      <svg viewBox="0 0 15 15" className="ml-[8px] w-[15px] h-[15px]" fill="#2f80cc">
        <rect width="6.5" height="6.5" rx="1" />
        <rect x="8.5" width="6.5" height="6.5" rx="1" fill="#8fbde6" />
        <rect y="8.5" width="6.5" height="6.5" rx="1" />
        <rect x="8.5" y="8.5" width="6.5" height="6.5" rx="1" />
      </svg>
    </div>
  </div>
);

const Watermark = () => (
  <div className="absolute left-[1389px] top-[774px] flex items-center">
    <svg viewBox="0 0 37 36" className="w-[37px] h-[36px]">
      <rect x="19" y="4" width="18" height="28" fill="#fff" stroke="#1d6b45" strokeWidth="1.5" />
      <path d="M22 9h12M22 13h12M22 17h12M22 21h12M22 25h12M28 5v26" stroke="#1d6b45" />
      <path d="M0 4l22-4v36L0 32z" fill="#1d6b45" />
      <path d="M7 12l7 12M14 12L7 24" stroke="#fff" strokeWidth="2.4" />
    </svg>
    <span className="ml-[8px] text-[30px] leading-[36px] text-[#2f7a5a] whitespace-nowrap [text-shadow:0_5px_9px_rgba(0,0,0,0.3)]">
      博物大百科
    </span>
  </div>
);

const Annotations = () => (
  <>
    <div className="absolute left-[97px] top-[507px] w-[141px] h-[107px] border-2 border-[#217346]" />
    <div className="absolute left-[235px] top-[611px] w-[6px] h-[6px] bg-[#217346]" />
    <div className="absolute left-[92.5px] top-[357.5px] w-[150px] h-[113px] border-4 border-[#fa1f14] rounded-[5px]" />
    <div className="absolute left-[90.5px] top-[475.5px] w-[156px] h-[32.5px] border-4 border-[#fa1f14] rounded-[5px]" />
    <div className="absolute left-[90.5px] top-[510px] w-[155px] h-[103.5px] border-4 border-[#fa1f14] rounded-[5px]" />
    <svg viewBox="0 0 1660 934" className="absolute inset-0 w-[1660px] h-[934px] pointer-events-none">
      <polygon points="352,222 213,327 207,323 200,340 219,337 218,332" fill="#fa1f14" />
    </svg>
    <div className="absolute left-[252px] top-[567px] text-[33px] leading-[46px] text-[#fa1f14] whitespace-nowrap">运算结果</div>
    <div className="absolute left-[239px] top-[617px] w-[25px] h-[24px] bg-white border border-[#8fb0a0] flex flex-col items-center justify-center gap-[2px]">
      <div className="w-[12px] h-[2px] bg-[#555]" />
      <div className="w-[12px] h-[3px] bg-[#2f78c4]" />
      <div className="w-[12px] h-[3px] bg-[#e8a040]" />
    </div>
    <div className="absolute -left-[28px] top-[575px] w-[46px] h-[46px] rounded-full bg-linear-to-b from-[#4cb45e] to-[#2f8f46] border-r-2 border-[#d8e8dc] flex items-center justify-end pr-[5px] text-[10px] font-bold text-white">
      64
    </div>
    <ImeBar />
    <Watermark />
    <div className="absolute left-[42px] top-[847px] text-[38.9px] leading-[52px] text-[#fb2a14] whitespace-nowrap [text-shadow:0_4px_12px_rgba(0,0,0,0.45)]">
      多单元格联合数组公式：行数（或列数）相同的单列（或单行）数组与多行多列数组的计算
    </div>
    <div className="absolute left-[27px] top-[30px] text-[21px] leading-[30px] text-[#dff3f5] whitespace-nowrap [text-shadow:-1px_-1px_0_#000,1px_-1px_0_#000,-1px_1px_0_#000,1px_1px_0_#000,2px_2px_0_#000]">
      1328x747(69%)
    </div>
  </>
);

export default function App() {
  return (
    <div className="relative w-[1660px] h-[934px] overflow-hidden bg-black font-['Liberation_Sans','Noto_Sans_CJK_SC',sans-serif]">
      <div className="blur-[0.5px]">
        <div className="h-[23px] bg-black" />
        <TitleBar />
        <TabRow />
        <Ribbon />
        <FormulaBar />
        <Sheet />
        <TabBar />
        <StatusBar />
        <div className="h-[23px] bg-black" />
        <Annotations />
      </div>
    </div>
  );
}
